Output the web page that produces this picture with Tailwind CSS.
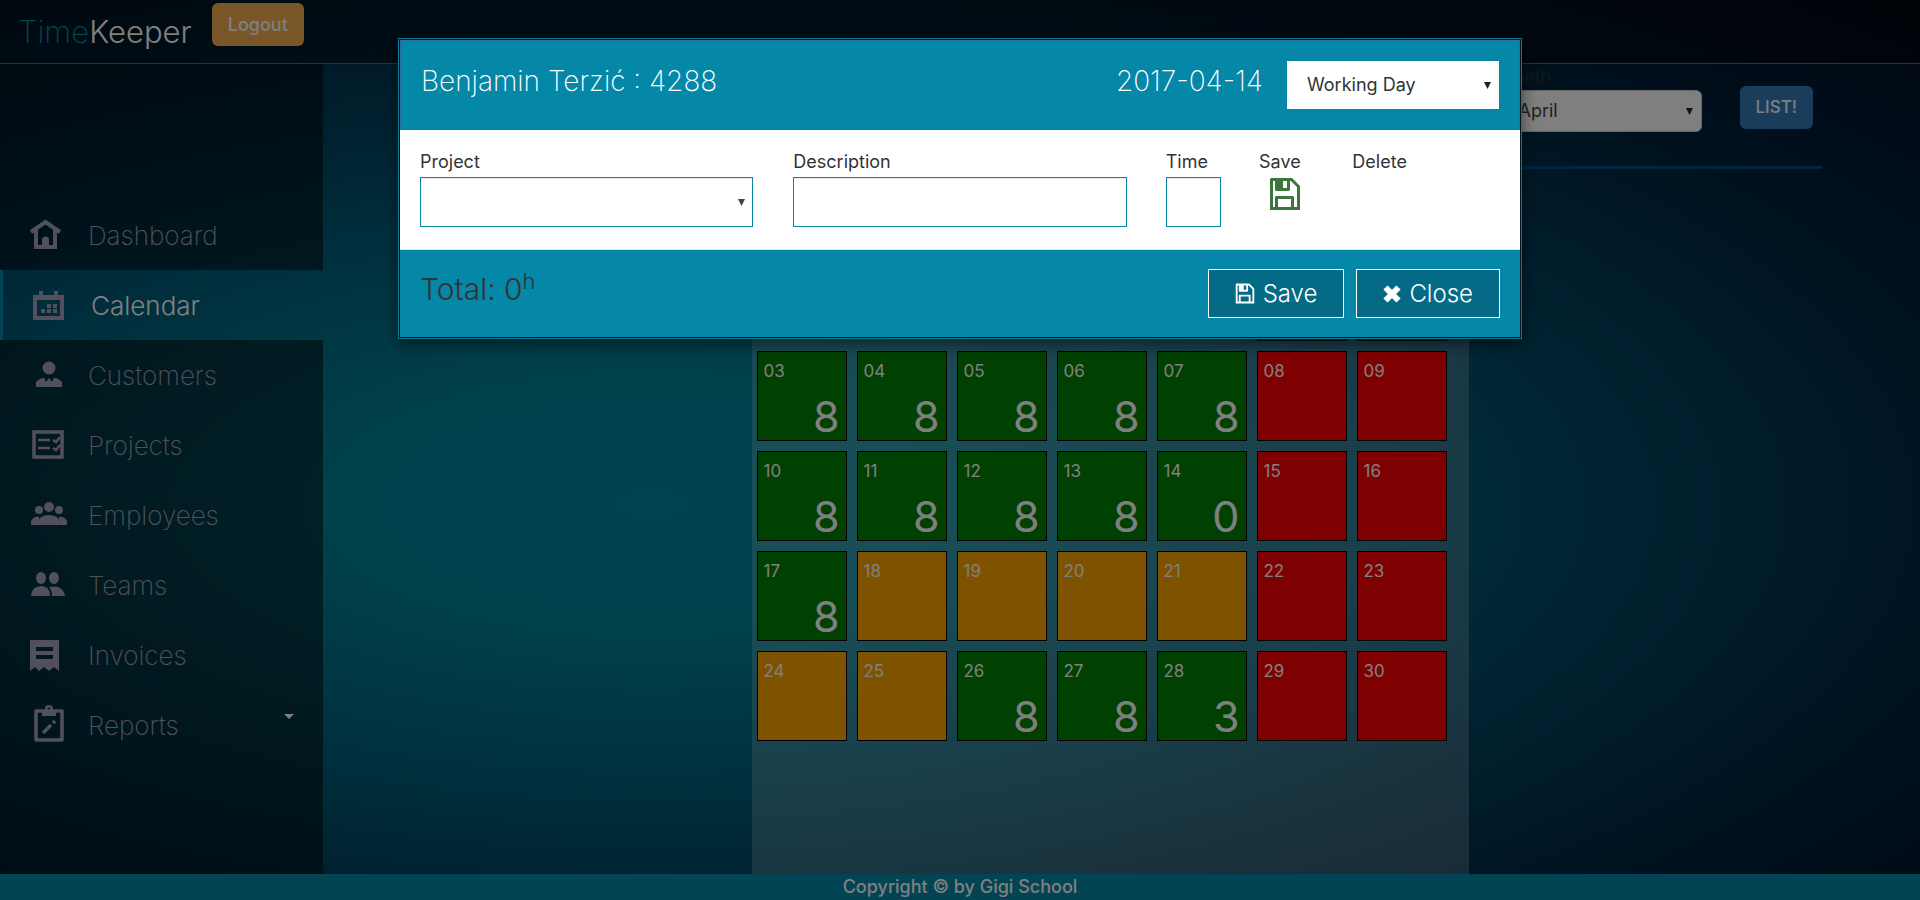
<!DOCTYPE html>
<html lang="en">
<head>
<meta charset="utf-8">
<meta name="viewport" content="width=device-width, initial-scale=1">
<title>TimeKeeper</title>
<script src="https://cdn.jsdelivr.net/npm/@tailwindcss/browser@4"></script>
</head>
<body class="font-['Inter','Noto_Sans',sans-serif] text-lg text-[#333]">
<div class="flex min-h-screen flex-col bg-[#000c1c] bg-[radial-gradient(ellipse_71%_60%_at_34%_56%,#00889f_0%,#008299_24%,#006e86_40%,#005a76_56%,#004460_72%,#003250_86%,#00223c_102%,#00142a_122%,#000a1a_140%)]">

  <header class="flex h-16 items-start gap-5 border-b border-[#0587a8] bg-black/45 pl-[18px]">
    <a href="#" class="pt-3 text-[31px] leading-10 font-extralight text-[#0587a8]">Time<span class="font-light text-white">Keeper</span></a>
    <button type="button" class="mt-[3px] h-[43px] rounded-md bg-[#f0ad4e] px-4 text-lg font-medium text-white">Logout</button>
  </header>

  <div class="flex flex-1">
    <nav class="flex w-[323px] shrink-0 flex-col text-[26px] font-extralight text-[#a4a0b8]">
      <div class="h-34 bg-black/50"></div>
      <a href="#" class="flex h-[70px] items-center gap-6 bg-black/50 pt-0.5 pl-7">
        <svg class="mb-0.5 h-9 w-9" viewBox="0 0 36 36" fill="none" stroke="currentColor" stroke-width="4"><path d="M3 15 17.500 5 32 15"/><path d="M8 13v17h19V13"/><path d="M14 30v-7a3.500 3.500 0 0 1 7 0v7z" fill="currentColor" stroke="none"/></svg>
        Dashboard</a>
      <a href="#" class="flex h-[70px] items-center gap-6 border-l-3 border-[#0587a8] pt-0.5 pl-7">
        <svg class="mb-0.5 h-9 w-9" viewBox="0 0 36 36" fill="currentColor"><path d="M8 4h4v4h11V4h4v4h6v25H2V8h6zM6 13v16h23V13z" fill-rule="evenodd"/><path d="M16 17h4v4h-4zM22 17h4v4h-4zM10 22h4v4h-4zM16 22h4v4h-4zM22 22h4v4h-4z"/></svg>
        <span class="font-light text-white">Calendar</span></a>
      <a href="#" class="flex h-[70px] items-center gap-6 bg-black/50 pt-0.5 pl-7">
        <svg class="mb-0.5 h-9 w-9" viewBox="0 0 36 36" fill="currentColor"><circle cx="21" cy="11" r="6.500"/><path d="M8 30v-5q4-4 8-4l2 4 3-4 3 4 2-4q4 0 8 4v5z"/></svg>
        Customers</a>
      <a href="#" class="flex h-[70px] items-center gap-6 bg-black/50 pt-0.5 pl-7">
        <svg class="mb-0.5 h-9 w-9" viewBox="0 0 36 36" fill="none" stroke="currentColor"><path d="M6 5h28v25H6z" stroke-width="3.500"/><path d="M10 13h12M10 21h12M25 13l3 2 4-5M25 21l3 2 4-5" stroke-width="2.500"/></svg>
        Projects</a>
      <a href="#" class="flex h-[70px] items-center gap-6 bg-black/50 pt-0.5 pl-7">
        <svg class="mb-0.5 h-9 w-9 overflow-visible" viewBox="0 0 36 36" fill="currentColor"><circle cx="21" cy="10" r="5"/><circle cx="11" cy="13" r="4"/><circle cx="31" cy="13" r="4"/><path d="M3 28v-4q3-5 8-4v2q-1 2-2 6zM39 28v-4q-3-5-8-4v2q1 2 2 6zM9 28q1-10 12-10t12 10z"/></svg>
        Employees</a>
      <a href="#" class="flex h-[70px] items-center gap-6 bg-black/50 pt-0.5 pl-7">
        <svg class="mb-0.5 h-9 w-9 overflow-visible" viewBox="0 0 36 36" fill="currentColor"><ellipse cx="13" cy="11" rx="5" ry="6"/><ellipse cx="26" cy="11" rx="5" ry="6"/><path d="M3 29q1-10 10-10t9 10zM24 29q0-6-3-9 14-3 16 9z"/></svg>
        Teams</a>
      <a href="#" class="flex h-[70px] items-center gap-6 bg-black/50 pt-0.5 pl-7">
        <svg class="mb-0.5 h-9 w-9" viewBox="0 0 36 36" fill="currentColor"><path d="M2 3h29v31l-5-4-5 4-5-4-5 4-4-4-5 4zM8 10v4h17v-4zM8 18v4h17v-4z" fill-rule="evenodd"/></svg>
        Invoices</a>
      <a href="#" class="flex h-[70px] items-center gap-6 bg-black/50 pt-0.5 pl-7">
        <svg class="mb-0.5 h-9 w-9 overflow-visible" viewBox="0 0 36 36" fill="none" stroke="currentColor"><path d="M8 4h26v29H8z" stroke-width="3.500" stroke-linejoin="round"/><path d="M14 7h14" stroke-width="4"/><path d="M15 26l8-8M25 16l2-2" stroke-width="3.500"/><circle cx="21" cy="2" r="2.800" stroke-width="2.500"/></svg>
        Reports
        <span class="mr-[29px] mb-5 ml-auto border-x-5 border-t-5 border-x-transparent border-t-white"></span></a>
      <div class="flex-1 bg-black/50"></div>
    </nav>

    <main class="flex flex-1 flex-col pr-[98px] pl-[75px]">
      <form class="flex justify-end gap-[38px] border-b-3 border-[#044a7c] pr-[9px] pb-[34px]">
        <div class="flex w-[204px] flex-col">
          <label for="month" class="h-[26px] leading-[26px] font-light">Month:</label>
          <div class="relative">
            <select id="month" class="h-[42px] w-full appearance-none rounded-md border border-[#ccc] bg-white px-5 text-lg text-[#444]"><option>April</option></select>
            <svg class="pointer-events-none absolute top-[18px] right-[9px] h-[7px] w-[7px]" viewBox="0 0 8 8" fill="#222"><path d="M0 0h8L4 8z"/></svg>
          </div>
        </div>
        <button type="button" class="mt-[22px] h-[43px] rounded-md bg-[#337ab7] px-4 text-[17px] font-medium text-white">LIST!</button>
      </form>

      <section aria-label="April 2017" class="mx-auto mt-[30px] w-[717px] flex-1 bg-white/20 pl-[5px]">
        <div class="grid h-13 w-[690px] grid-cols-7 items-center gap-[10px] text-center text-white">
          <span>Mon</span><span>Tue</span><span>Wed</span><span>Thu</span><span>Fri</span><span>Sat</span><span>Sun</span>
        </div>
        <div id="days" class="grid w-[690px] grid-cols-7 gap-[10px]"></div>
      </section>
    </main>
  </div>

  <footer class="h-[26px] bg-[#0587a8] text-center text-lg leading-[26px] font-medium text-white">Copyright © by Gigi School</footer>
</div>

<div class="fixed inset-0 bg-black/50">
  <div role="dialog" aria-modal="true" aria-labelledby="who" class="mx-auto mt-[38px] w-[1124px] max-w-full border border-[#057b94] bg-[#00141e] p-px shadow-[0_5px_15px_rgba(0,0,0,0.5)]">
    <div class="flex h-[90px] items-start border border-[#2a6d9e] bg-[#0587a8] px-5 pt-5 text-[28px] leading-10 font-extralight text-white">
      <h2 id="who">Benjamin Terzić : 4288</h2>
      <span class="mr-6 ml-auto">2017-04-14</span>
      <div class="relative">
        <select aria-label="Day type" class="block h-12 w-[212px] appearance-none bg-white px-5 text-lg font-normal text-[#333]"><option>Working Day</option></select>
        <svg class="pointer-events-none absolute top-[21px] right-2 h-[7px] w-[7px]" viewBox="0 0 8 8" fill="#222"><path d="M0 0h8L4 8z"/></svg>
      </div>
    </div>
    <div class="grid h-[119px] grid-cols-12 bg-white pt-5 text-lg">
      <div class="col-span-4 px-5">
        <label for="project" class="block h-[27px] leading-6">Project</label>
        <div class="relative">
          <select id="project" class="block h-[50px] w-full appearance-none border border-[#0587a8] bg-white px-3 shadow-[inset_0_1px_1px_rgba(0,0,0,0.08)]"><option></option></select>
          <svg class="pointer-events-none absolute top-[22px] right-2 h-[7px] w-[7px]" viewBox="0 0 8 8" fill="#444"><path d="M0 0h8L4 8z"/></svg>
        </div>
      </div>
      <div class="col-span-4 px-5">
        <label for="description" class="block h-[27px] leading-6">Description</label>
        <input id="description" type="text" class="block h-[50px] w-full border border-[#0587a8] bg-white px-3 shadow-[inset_0_1px_1px_rgba(0,0,0,0.08)]">
      </div>
      <div class="pl-[19px]">
        <label for="time" class="block h-[27px] leading-6">Time</label>
        <input id="time" type="text" class="block h-[50px] w-[55px] border border-[#0587a8] bg-white px-3 shadow-[inset_0_1px_1px_rgba(0,0,0,0.08)]">
      </div>
      <div class="pl-[19px]">
        <div class="h-[27px] leading-6">Save</div>
        <button type="button" aria-label="Save entry" class="block pl-2 text-[#3c763d]">
          <svg class="h-9 w-9" viewBox="0 0 36 36" fill="currentColor"><path d="M4 1h21l8 8v24H3V2zM6 4v26h2V20l1-1h17l1 1v10h3V10l-6-6h-1v9l-1 1H9l-1-1V4zM11 22v8h13v-8zM16 4v7h4V4z" fill-rule="evenodd"/></svg>
        </button>
      </div>
      <div class="pl-[19px]"><div class="h-[27px] leading-6">Delete</div></div>
    </div>
    <div class="flex h-[88px] items-start border-t border-[#d5e8e8] bg-[#0587a8] px-5 pt-[19px]">
      <p class="text-[30px] leading-10 font-light">Total: 0<sup class="text-[22px]">h</sup></p>
      <button type="button" class="ml-auto flex h-[49px] items-center gap-2 border border-white bg-[#046a85] px-[26px] text-2xl font-light text-white">
        <svg class="h-[21px] w-5" viewBox="2 0 32 34" fill="currentColor"><path d="M4 1h21l8 8v24H3V2zM6 4v26h2V20l1-1h17l1 1v10h3V10l-6-6h-1v9l-1 1H9l-1-1V4zM11 22v8h13v-8zM16 4v7h4V4z" fill-rule="evenodd"/></svg>
        Save</button>
      <button type="button" class="ml-3 flex h-[49px] items-center gap-2 border border-white bg-[#046a85] px-[26px] text-2xl font-light text-white">
        <svg class="h-[18px] w-[18px]" viewBox="0 0 18 18" stroke="currentColor" stroke-width="6"><path d="M2.500 2.500l13 13M15.500 2.500l-13 13"/></svg>
        Close</button>
    </div>
  </div>
</div>

<script>
  // April 2017 starts on a Saturday; days absent from the map have no entry.
  const hours = {3:8,4:8,5:8,6:8,7:8,10:8,11:8,12:8,13:8,14:0,17:8,26:8,27:8,28:3};
  const days = document.getElementById('days');
  for (let d = 1; d <= 30; d++) {
    const weekend = (d + 4) % 7 >= 5;
    const b = document.createElement('button');
    b.type = 'button';
    b.className = 'flex h-[90px] flex-col border border-black px-[6px] pt-[9px] text-left text-white ' +
      (weekend ? 'bg-[#ff0000]' : d in hours ? 'bg-[#008000]' : 'bg-[#ffa500]') + (d === 1 ? ' col-start-6' : '');
    b.innerHTML = '<span class="text-[17px] leading-5">' + String(d).padStart(2, '0') + '</span>' +
      (d in hours ? '<span class="w-full text-right text-[43px] leading-[71px]">' + hours[d] + '</span>' : '');
    days.append(b);
  }
</script>
</body>
</html>
